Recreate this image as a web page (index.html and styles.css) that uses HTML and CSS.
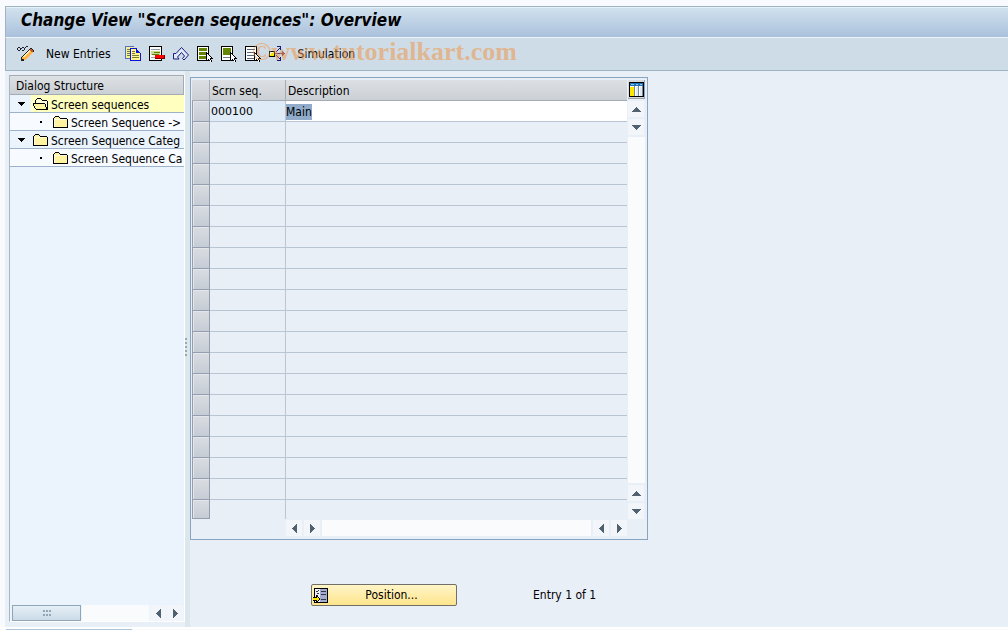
FILE: index.html
```html
<!DOCTYPE html>
<html lang="en">
<head>
  <meta charset="UTF-8">
  <meta name="viewport" content="width=device-width, initial-scale=1.0">
  <title>Change View "Screen sequences": Overview</title>
  <link rel="stylesheet" href="styles.css">
</head>
<body>
  <!-- Shared icons -->
  <svg class="icon-defs" aria-hidden="true">
    <symbol id="cursor" viewBox="0 0 7 11">
      <path d="M0 0h1v1h1v1h1v1h1v1h1v1h1v1h1v1H5v1h1v2H4V9H3V8H2v1H0z" fill="#000"/>
      <path d="M1 2h1v1h1v1h1v1h1v1H4v2h1v2H4V8H3V7H2v1H1z" fill="#fff"/>
    </symbol>
    <symbol id="folder" viewBox="0 0 15 12">
      <path d="M1 2h1V1h4v1h1v1h7v8H1z" fill="#fff2a0"/>
      <path d="M1 3h12v1H2v7H1z" fill="#fffbdc"/>
      <path d="M2 0h4v1H2zM1 1h1v1H1zM6 1h1v1H6zM7 2h7v1H7zM0 2h1v9H0zM14 3h1v8h-1zM0 11h15v1H0z" fill="#000"/>
    </symbol>
    <symbol id="folder-open" viewBox="0 0 15 12">
      <path d="M2 2h5l1 1h6v8H2z" fill="#fffbdc"/>
      <path d="M1 6h11v1h1v4H3V9H2V7H1z" fill="#fff2a0"/>
      <path d="M4 0h4v1H4zM3 1h1v1H3zM8 1h1v1H8zM9 2h5v1H9zM2 2h1v3H2zM14 3h1v9h-1zM0 5h12v1H0zM0 6h1v2H0zM1 8h1v2H1zM12 6h1v3h-1zM13 9h1v2h-1zM2 10h1v1H2zM3 11h12v1H3z" fill="#000"/>
    </symbol>
    <symbol id="up" viewBox="0 0 9 5"><path d="M4 0h1v1h1v1h1v1h1v1h1v1H0V4h1V3h1V2h1V1h1z"/></symbol>
    <symbol id="down" viewBox="0 0 9 5"><path d="M0 0h9v1H8v1H7v1H6v1H5v1H4V4H3V3H2V2H1V1H0z"/></symbol>
    <symbol id="left" viewBox="0 0 5 9"><path d="M4 0h1v9H4V8H3V7H2V6H1V5H0V4h1V3h1V2h1V1h1z"/></symbol>
    <symbol id="right" viewBox="0 0 5 9"><path d="M0 0h1v1h1v1h1v1h1v1h1v1H4v1H3v1H2v1H1v1H0z"/></symbol>
  </svg>

  <div class="window">
    <header class="title-bar">
      <h1>Change View "Screen sequences": Overview</h1>
    </header>

    <!-- Application toolbar -->
    <div class="toolbar">
      <button class="tool" aria-label="Display / Change">
        <svg width="17" height="16" viewBox="0 0 17 16">
          <path d="M1 1h2v1H1zM0 2h1v2H0zM1 4h2v1H1zM3 2h1v2H3zM4 2h1v1H4zM5 1h2v1H5zM5 4h2v1H5zM7 2h1v2H7zM8 1h1v1H8zM9 0h2v1H9z" fill="#223"/>
          <path d="M5 12l8-9 3 3-8 8-3 1z" fill="#ffb548"/>
          <path d="M6 11l7-8 1 1-7 8z" fill="#fff0c0"/>
          <path d="M4 11h1v-1h1V9h1V8h1V7h1V6h1V5h1V4h1V3h1V2h2v1h1v1h1v2h-1v1h-1v1h-1v1h-1v1h-1v1h-1v1h-1v1H9v1H7v1H4zm2 0H5v2h2v1h2v-1h1v-1h1v-1h1v-1h1V9h1V8h1V7h1V5h-1V4h-1V3h-1v1h-1v1h-1v1h-1v1H9v1H8v1H7v1H6z" fill="#222" fill-rule="evenodd"/>
          <path d="M13 3h2v1h1v2h-2V5h-1z" fill="#c85a2a"/>
        </svg>
      </button>
      <button class="tool tool-text tool-new">New Entries</button>
      <button class="tool" aria-label="Copy As">
        <svg width="16" height="16" viewBox="0 0 16 16">
          <path d="M0 0h9v13H0z" fill="#f7f29a"/>
          <path d="M0 0h9v1H0zM0 1h1v12H0zM0 12h5v1H0z" fill="#5871bd"/>
          <path d="M2 3h4v1H2zM2 5h3v1H2zM2 7h3v1H2zM2 9h3v1H2z" fill="#66795a"/>
          <path d="M6 3h5l4 4v8H6z" fill="#fff58a"/>
          <path d="M5 2h7v1H6v11h9V7h-4V3h1v1h1v1h1v1h1v1h1v8H5z" fill="#1010d8"/>
          <path d="M7 5h3v1H7zM7 7h3v1H7zM7 9h7v1H7zM7 11h7v1H7z" fill="#7a7a38"/>
        </svg>
      </button>
      <button class="tool" aria-label="Delete">
        <svg width="16" height="16" viewBox="0 0 16 16">
          <path d="M0 0h13v15H0z"/><path d="M1 1h11v13H1z" fill="#fff"/>
          <path d="M2 3h9v1H2zM2 11h9v1H2z" fill="#99a"/>
          <path d="M2 5h9v4H2z" fill="#c9dc91"/>
          <path d="M5 6h6v1H5zM3 8h7v1H3z" fill="#608000"/>
          <path d="M6 9h10v4H6z" fill="#700"/><path d="M6 9h9v3H6z" fill="#f00"/>
        </svg>
      </button>
      <button class="tool" aria-label="Undo Change">
        <svg class="smooth" width="16" height="14" viewBox="0 0 16 14">
          <path d="M.5 6.500v5.500h5.500l-1.500-2 4-4.500 3 3.500-2 2.500 1.500 1.500 4.500-5-7-7.500-5.500 6z" fill="#dfeaf5" stroke="#191980"/>
        </svg>
      </button>
      <button class="tool" aria-label="Select All">
        <svg width="16" height="17" viewBox="0 0 16 17">
          <path d="M0 0h12v15H0z"/><path d="M1 1h10v13H1z" fill="#fff"/>
          <path d="M2 2h8v3H2zM2 6h8v3H2zM2 10h8v3H2z" fill="#648500"/>
          <use href="#cursor" x="9" y="6" width="7" height="11"/>
        </svg>
      </button>
      <button class="tool" aria-label="Select Block">
        <svg width="16" height="17" viewBox="0 0 16 17">
          <path d="M0 0h12v15H0z"/><path d="M1 1h10v13H1z" fill="#fff"/>
          <path d="M2 2h8v7H2z" fill="#648500"/><path d="M2 11h7v1H2z" fill="#778"/>
          <use href="#cursor" x="9" y="6" width="7" height="11"/>
        </svg>
      </button>
      <button class="tool" aria-label="Deselect All">
        <svg width="16" height="17" viewBox="0 0 16 17">
          <path d="M0 0h12v15H0z"/><path d="M1 1h10v13H1z" fill="#fff"/>
          <path d="M2 3h8v1H2zM2 6h8v1H2zM2 9h8v1H2zM2 12h8v1H2z" fill="#567"/>
          <use href="#cursor" x="9" y="6" width="7" height="11"/>
        </svg>
      </button>
      <button class="tool" aria-label="Simulate">
        <svg width="17" height="16" viewBox="0 0 17 16">
          <path d="M0 5h6v6H0z"/><path d="M1 6h4v4H1z" fill="#f6e600"/><path d="M1 6h3v1H2v2H1z" fill="#fff"/>
          <path d="M6 7h9v1H6z" fill="#603070"/>
          <path d="M13 5h1v1h1v1h1v1h-1v1h-1v1h-1z" fill="#603070"/>
          <path d="M7 5h1v1H7zM8 4h1v1H8zM9 3h1v1H9zM10 2h1v1h-1zM8 0h4v4h-1V1H8zM7 9h1v1H7zM8 10h1v1H8zM9 11h1v1H9zM10 12h1v1h-1zM8 14h3v-3h1v4H8z" fill="#181880"/>
        </svg>
      </button>
      <button class="tool tool-text tool-sim">Simulation</button>
      <span class="watermark">©www.tutorialkart.com</span>
    </div>

    <main class="content">
      <!-- Dialog structure -->
      <nav class="tree-panel" aria-label="Dialog Structure">
        <h2>Dialog Structure</h2>
        <ul class="tree">
          <li class="selected">
            <button class="toggle" aria-label="Collapse"><svg width="7" height="4" viewBox="0 0 9 5"><use href="#down"/></svg></button>
            <a href="#"><svg width="15" height="12"><use href="#folder-open"/></svg><span>Screen sequences</span></a>
          </li>
          <li class="child">
            <span class="dot"></span>
            <a href="#"><svg width="15" height="12"><use href="#folder"/></svg><span>Screen Sequence -&gt;</span></a>
          </li>
          <li>
            <button class="toggle" aria-label="Collapse"><svg width="7" height="4" viewBox="0 0 9 5"><use href="#down"/></svg></button>
            <a href="#"><svg width="15" height="12"><use href="#folder"/></svg><span>Screen Sequence Categ</span></a>
          </li>
          <li class="child">
            <span class="dot"></span>
            <a href="#"><svg width="15" height="12"><use href="#folder"/></svg><span>Screen Sequence Ca</span></a>
          </li>
        </ul>
        <div class="scroll-x">
          <div class="thumb"><i></i><i></i><i></i><i></i><i></i><i></i></div>
          <div class="track"></div>
          <button class="arrow" aria-label="Scroll left"><svg width="5" height="9"><use href="#left"/></svg></button>
          <button class="arrow" aria-label="Scroll right"><svg width="5" height="9"><use href="#right"/></svg></button>
        </div>
      </nav>

      <div class="splitter"><i></i><i></i><i></i><i></i><i></i></div>

      <section class="work-area">
        <div class="grid-panel">
          <table class="grid">
            <thead>
              <tr>
                <th class="col-sel"></th>
                <th class="col-seq" scope="col">Scrn seq.</th>
                <th scope="col">Description</th>
              </tr>
            </thead>
            <tbody id="gridRows">
              <tr>
                <td class="sel"></td>
                <td class="seq">000100</td>
                <td class="desc"><input type="text" id="description" value="Main" aria-label="Description"></td>
              </tr>
            </tbody>
          </table>
          <div class="scroll-y">
            <button class="config" aria-label="Configuration">
              <svg width="15" height="15" viewBox="0 0 15 15">
                <path d="M0 0h15v15H0z"/><path d="M1 1h13v13H1z" fill="#fff"/>
                <path d="M1 1h13v3H1z" fill="#2070b8"/><path d="M2 2h3v1H2zM7 2h2v1H7zM11 2h2v1h-2z" fill="#8cc8f0"/>
                <path d="M1 5h4v9H1z" fill="#ffe800"/>
                <path d="M5 4h1v10H5zM9 4h1v10H9zM13 4h1v10h-1z" fill="#6f8cab"/>
                <path d="M7 5h2v9H7zM11 5h2v9h-2z" fill="#e4e9ee"/>
              </svg>
            </button>
            <button class="arrow" aria-label="Scroll up"><svg width="9" height="5"><use href="#up"/></svg></button>
            <button class="arrow" aria-label="Page up"><svg width="9" height="5"><use href="#down"/></svg></button>
            <div class="track"></div>
            <button class="arrow" aria-label="Page down"><svg width="9" height="5"><use href="#up"/></svg></button>
            <button class="arrow" aria-label="Scroll down"><svg width="9" height="5"><use href="#down"/></svg></button>
          </div>
          <div class="scroll-x">
            <button class="arrow" aria-label="Scroll left"><svg width="5" height="9"><use href="#left"/></svg></button>
            <button class="arrow" aria-label="Page left"><svg width="5" height="9"><use href="#right"/></svg></button>
            <div class="track"></div>
            <button class="arrow" aria-label="Page right"><svg width="5" height="9"><use href="#left"/></svg></button>
            <button class="arrow" aria-label="Scroll right"><svg width="5" height="9"><use href="#right"/></svg></button>
          </div>
        </div>

        <div class="footer">
          <button class="position-btn">
            <svg width="15" height="15" viewBox="0 0 15 15">
              <path d="M1 0h14v15H1z"/><path d="M2 1h12v13H2z" fill="#a3acd0"/>
              <path d="M2 1h5v13H2z" fill="#eef1f8"/>
              <path d="M3 3h2v1H3zM4 5h2v1H4zM3 7h2v1H3zM5 2h1v1H5zM8 3h5v1H8zM8 6h5v1H8zM8 11h5v1H8z" fill="#334"/>
              <path d="M0 9h3V7h1v1h1v1h1v1h1v2H6v1H5v1H4v1H3v-2H0z"/><path d="M0 10h4V9h1v1h1v2H5v1H4v-1H0z" fill="#ffe600"/>
            </svg>
            <span>Position...</span>
          </button>
          <span class="entry">Entry 1 of 1</span>
        </div>
      </section>
    </main>
  </div>
  <div class="status-edge"></div>

  <script>
    const VISIBLE_ROWS = 20;
    const gridRows = document.getElementById("gridRows");
    const description = document.getElementById("description");

    // Fill the grid with blank rows below the data
    while (gridRows.rows.length < VISIBLE_ROWS) {
      const row = gridRows.insertRow();
      row.insertCell().className = "sel";
      row.insertCell();
      row.insertCell();
    }

    description.focus();
    description.select();
  </script>
</body>
</html>
```
FILE: styles.css
```css
* {
  margin: 0;
  padding: 0;
  box-sizing: border-box;
}

body {
  display: flex;
  flex-direction: column;
  height: 100vh;
  padding-top: 6px;
  background: #f8fafd;
  color: #000;
  font-family: "DejaVu Sans Condensed", "DejaVu Sans", sans-serif;
  font-stretch: condensed;
  font-size: 12px;
  line-height: 16px;
  overflow: hidden;
}

button,
input {
  font: inherit;
  color: inherit;
  border: none;
  background: none;
}

a {
  color: inherit;
  text-decoration: none;
}

svg {
  display: block;
  flex: none;
  shape-rendering: crispEdges;
}

svg.smooth {
  shape-rendering: auto;
}

.icon-defs {
  position: absolute;
  width: 0;
  height: 0;
}

.window {
  flex: 1;
  display: flex;
  flex-direction: column;
  min-height: 0;
  margin-left: 5px;
  background: #e8eff7;
}

/* Title and toolbar */
.title-bar {
  height: 31px;
  padding: 3px 15px;
  border-top: 1px solid #9fb3c5;
  border-left: 1px solid #9fb3c5;
  background: linear-gradient(180deg, #d2e2ee, #aac1dc);
  box-shadow: inset 0 1px #e6f0f7;
}

.title-bar h1 {
  font-size: 17px;
  font-style: italic;
  line-height: 20px;
  white-space: nowrap;
}

.toolbar {
  position: relative;
  display: flex;
  align-items: center;
  gap: 8px;
  height: 34px;
  padding-left: 11px;
  border-top: 1px solid #edf4fa;
  border-left: 1px solid #9fb3c5;
  border-bottom: 1px solid #9fb3c5;
  background: #cedce7;
}

.tool-text {
  white-space: nowrap;
}

.tool-new {
  margin: 0 6px 0 4px;
}

.tool-sim {
  margin-left: 4px;
}

.watermark {
  position: absolute;
  left: 246px;
  top: -1px;
  color: rgba(240, 150, 70, 0.55);
  font-family: "Liberation Serif", serif;
  font-size: 26px;
  font-weight: bold;
  font-stretch: normal;
  line-height: 30px;
  pointer-events: none;
}

.content {
  flex: 1;
  display: flex;
  min-height: 0;
}

/* Dialog structure */
.tree-panel {
  display: flex;
  flex-direction: column;
  width: 176px;
  margin: 4px 0 5px 4px;
  border-left: 1px solid #a8b6c4;
  border-right: 1px solid #fff;
  border-bottom: 1px solid #fff;
  background: #ebf3fc;
  overflow: hidden;
}

.tree-panel h2 {
  height: 20px;
  padding-left: 6px;
  border: 1px solid #a4acb6;
  border-left: none;
  background: linear-gradient(180deg, #dde1e4, #cbd0d5);
  font-size: 12px;
  font-weight: normal;
  line-height: 20px;
}

.tree {
  flex: 1;
  list-style: none;
}

.tree li {
  display: flex;
  align-items: center;
  height: 18px;
  border-bottom: 1px solid #9db2ca;
  white-space: nowrap;
}

.tree li.child {
  background: #f7fbff;
}

.tree a {
  flex: 1;
  display: flex;
  align-items: center;
  gap: 3px;
  height: 17px;
  padding-left: 2px;
}

.tree a span {
  padding-top: 2px;
}

.tree .selected a {
  background: #ffffbf;
}

.toggle {
  display: flex;
  align-items: center;
  width: 21px;
  padding-left: 8px;
}

.dot {
  width: 41px;
  padding-left: 30px;
}

.dot::before {
  content: "";
  display: block;
  width: 2px;
  height: 2px;
  background: #000;
}

/* Scroll bars */
.arrow {
  display: flex;
  align-items: center;
  justify-content: center;
  flex: none;
  width: 16px;
  height: 16px;
  background: #f2f6fa;
  fill: #50626f;
}

.track {
  flex: 1;
  background: #fafbfc;
}

.scroll-x {
  display: flex;
  gap: 2px;
  height: 16px;
}

.tree-panel .scroll-x {
  gap: 1px;
  padding: 0 1px 0 2px;
}

.thumb {
  display: grid;
  grid-template-columns: repeat(3, 2px);
  gap: 2px 1px;
  place-content: center;
  width: 69px;
  border: 1px solid #90a5b7;
  background: linear-gradient(180deg, #e6eff6, #cbdbe7);
}

.thumb i,
.splitter i {
  width: 2px;
  height: 2px;
  background: #94a7b8;
}

.splitter {
  display: flex;
  flex-direction: column;
  align-items: flex-start;
  justify-content: center;
  gap: 2px;
  width: 5px;
  padding-bottom: 4px;
  background: #dbe6ed;
}

/* Work area */
.work-area {
  flex: 1;
  min-width: 0;
  padding-top: 6px;
}

.grid-panel {
  display: grid;
  grid-template-columns: minmax(0, 1fr) 17px;
  column-gap: 1px;
  width: 56%;
  min-width: 360px;
  padding: 2px 2px 3px 1px;
  border: 1px solid #87a4c0;
}

.grid {
  width: 100%;
  table-layout: fixed;
  border-collapse: separate;
  border-spacing: 0;
}

.grid th {
  height: 21px;
  padding: 2px 0 0 2px;
  border-right: 1px solid #a5abb5;
  border-bottom: 1px solid #a5abb5;
  background: linear-gradient(180deg, #dde0e3, #cbd0d5);
  font-weight: normal;
  text-align: left;
}

.grid th:last-child {
  border-right: none;
}

.grid .col-sel {
  width: 18px;
}

.grid .col-seq {
  width: 76px;
}

.grid td {
  height: 21px;
  border-right: 1px solid #bac5d3;
  border-bottom: 1px solid #bac5d3;
}

.grid td:last-child {
  border-right: none;
}

.grid tr:last-child td {
  height: 19px;
  border-bottom: none;
}

.grid .sel,
.grid tr:last-child .sel {
  border: 1px solid #949eae;
  border-top: none;
  background: linear-gradient(180deg, #d9dde2, #c6ccd5);
  box-shadow: inset 1px 1px #e3e6ea;
}

.grid .seq {
  padding: 2px 0 0 1px;
  background: #dfebf6;
  font-family: "DejaVu Sans", sans-serif;
  font-size: 11px;
  font-stretch: normal;
}

.grid .desc {
  padding-top: 2px;
  background: #fff;
}

.desc input {
  display: block;
  width: 100%;
  height: 16px;
  outline: none;
  caret-color: transparent;
}

.desc input::selection {
  background: #91acca;
  color: #000;
}

.scroll-y {
  display: flex;
  flex-direction: column;
  gap: 2px;
  align-items: stretch;
}

.scroll-y .config {
  display: flex;
  align-items: center;
  justify-content: center;
  height: 19px;
  border-right: 1px solid #9aa3ad;
  border-bottom: 1px solid #9aa3ad;
  background: #d6dade;
}

.grid-panel > .scroll-x {
  margin: 1px 0 0 94px;
}

/* Footer */
.footer {
  display: flex;
  align-items: center;
  gap: 76px;
  padding: 44px 0 0 121px;
}

.position-btn {
  display: flex;
  align-items: center;
  width: 146px;
  height: 22px;
  padding: 0 1px;
  border: 1px solid #716f66;
  border-radius: 2px;
  background: linear-gradient(180deg, #fff5c8, #ffe48c);
}

.position-btn span {
  flex: 1;
}

.entry {
  white-space: nowrap;
}

/* Top edge of the status bar */
.status-edge {
  height: 4px;
  border-top: 2px solid #fff;
  border-bottom: 1px solid #fff;
  background: linear-gradient(#adc3d9, #adc3d9) 6px 0 / 126px 1px no-repeat;
}
```
